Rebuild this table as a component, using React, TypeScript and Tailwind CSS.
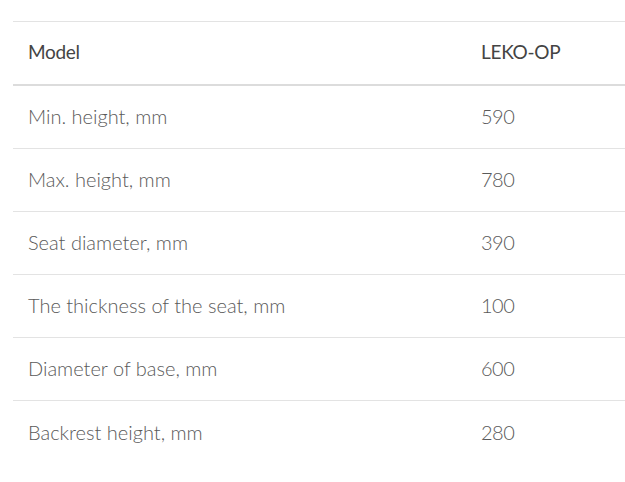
const rows: [string, string][] = [
  ["Min. height, mm", "590"],
  ["Max. height, mm", "780"],
  ["Seat diameter, mm", "390"],
  ["The thickness of the seat, mm", "100"],
  ["Diameter of base, mm", "600"],
  ["Backrest height, mm", "280"],
]

export default function App() {
  return (
    <div className="min-h-[482px] w-[625px] bg-white pt-[21px] pl-[13px] font-['Lato','Open_Sans',sans-serif]">
      <div className="border-t border-[#e3e3e3]">
        <div className="grid h-[64px] grid-cols-[468px_1fr] items-center border-b-2 border-[#dcdcdc] pb-[1px] text-[19px] tracking-[-0.3px] text-[#444]">
          <div className="pl-[15px]">Model</div>
          <div>LEKO-OP</div>
        </div>
        {rows.map(([label, value], i) => (
          <div
            key={label}
            className={
              "grid h-[63px] grid-cols-[468px_1fr] items-center pb-[2px] text-[20px] font-light text-[#5a5a5a] " +
              (i < rows.length - 1 ? "border-b border-[#e3e3e3]" : "")
            }
          >
            <div className="pl-[15px]">{label}</div>
            <div className="tracking-[-0.5px]">{value}</div>
          </div>
        ))}
      </div>
    </div>
  )
}
